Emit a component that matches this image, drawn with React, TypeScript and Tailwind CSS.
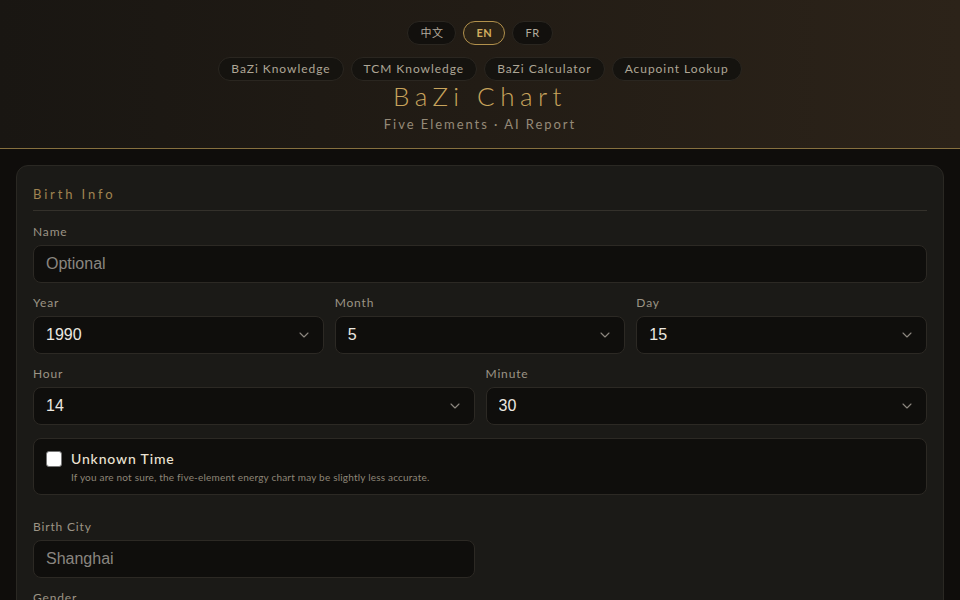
import { ChevronDown } from "lucide-react";

const langs = [
  { label: "中文", active: false },
  { label: "EN", active: true },
  { label: "FR", active: false },
];

const navLinks = ["BaZi Knowledge", "TCM Knowledge", "BaZi Calculator", "Acupoint Lookup"];

const labelFont = { fontFamily: "Lato, 'Noto Sans', sans-serif" };
const fieldFont = { fontFamily: "'Liberation Sans', Arial, sans-serif" };

function Label({ children }: { children: React.ReactNode }) {
  return (
    <div className="mb-[5px] text-[12px] leading-4 tracking-[0.07em] text-[#9c9485]" style={labelFont}>
      {children}
    </div>
  );
}

function SelectField({ label, value }: { label: string; value: string }) {
  return (
    <div>
      <Label>{label}</Label>
      <div className="relative">
        <select
          defaultValue={value}
          className="h-[38px] w-full appearance-none rounded-lg border border-[#2c2924] bg-[#0f0e0c] pl-3 pr-8 text-[16px] text-[#ece8e0] outline-none"
          style={fieldFont}
        >
          <option value={value}>{value}</option>
        </select>
        <ChevronDown
          className="pointer-events-none absolute right-3 top-1/2 size-4 -translate-y-1/2 text-[#8d8880]"
          strokeWidth={1.6}
        />
      </div>
    </div>
  );
}

function TextField({ label, placeholder }: { label: string; placeholder: string }) {
  return (
    <div>
      <Label>{label}</Label>
      <input
        placeholder={placeholder}
        className="h-[38px] w-full rounded-lg border border-[#2c2924] bg-[#0f0e0c] px-3 text-[16px] text-[#ece8e0] outline-none placeholder:text-[#8a8680]"
        style={fieldFont}
      />
    </div>
  );
}

export default function App() {
  return (
    <div className="min-h-screen bg-[#0f0d0b]" style={labelFont}>
      <header className="flex flex-col items-center border-b border-[#86703f] bg-gradient-to-r from-[#191612] via-[#221c15] to-[#2c2319] pb-[14px] pt-[21px]">
        <div className="flex gap-[7px]">
          {langs.map((l) => (
            <button
              key={l.label}
              className={
                l.active
                  ? "h-6 rounded-full border border-[#b2914c] bg-[#2a2216] px-3 text-[11px] font-bold tracking-[0.05em] text-[#d2ad5e]"
                  : "h-6 rounded-full border border-[#2a2620] bg-[#12100d] px-3 text-[11px] tracking-[0.05em] text-[#b3ab9c]"
              }
              style={{ fontFamily: "Lato, 'Noto Sans CJK SC', sans-serif" }}
            >
              {l.label}
            </button>
          ))}
        </div>
        <nav className="mt-3 flex gap-[7px]">
          {navLinks.map((n) => (
            <a
              key={n}
              className="flex h-6 items-center rounded-full border border-[#2a2620] bg-[#15130f] px-3 text-[12px] tracking-[0.08em] text-[#aea696]"
            >
              {n}
            </a>
          ))}
        </nav>
        <h1 className="-mt-px text-[26px] font-light leading-8 tracking-[0.21em] text-[#c8a45c]">BaZi Chart</h1>
        <p className="mt-[2px] text-[13px] leading-5 tracking-[0.15em] text-[#958a78]">Five Elements · AI Report</p>
      </header>

      <main className="px-4 pt-4">
        <section className="rounded-xl border border-[#2a2823] bg-[#1b1a17] px-4 pt-[18px] pb-6">
          <h2 className="border-b border-[#34312b] pb-[6px] text-[13px] leading-5 tracking-[0.22em] text-[#a08451]">
            Birth Info
          </h2>

          <div className="mt-[13px] flex flex-col gap-3">
            <TextField label="Name" placeholder="Optional" />

            <div className="grid grid-cols-3 gap-[11px]">
              <SelectField label="Year" value="1990" />
              <SelectField label="Month" value="5" />
              <SelectField label="Day" value="15" />
            </div>

            <div className="grid grid-cols-2 gap-[11px]">
              <SelectField label="Hour" value="14" />
              <SelectField label="Minute" value="30" />
            </div>

            <label className="mt-[1px] flex gap-[9px] rounded-lg border border-[#2c2924] bg-[#0f0e0c] px-3 pt-[11px] pb-[10px]">
              <input type="checkbox" className="mt-[1px] size-4 shrink-0 appearance-none rounded-[3px] border border-[#777] bg-white" />
              <div>
                <div className="text-[14px] font-medium leading-[18px] tracking-[0.06em] text-[#ebe3d3]">Unknown Time</div>
                <div className="mt-[2px] text-[10px] leading-[14px] tracking-[0.02em] text-[#8d8577]">
                  If you are not sure, the five-element energy chart may be slightly less accurate.
                </div>
              </div>
            </label>

            <div className="mt-3 grid grid-cols-2 gap-[11px]">
              <TextField label="Birth City" placeholder="Shanghai" />
            </div>

            <div>
              <Label>Gender</Label>
              <div className="h-[38px]" />
            </div>
          </div>
        </section>
      </main>
    </div>
  );
}
